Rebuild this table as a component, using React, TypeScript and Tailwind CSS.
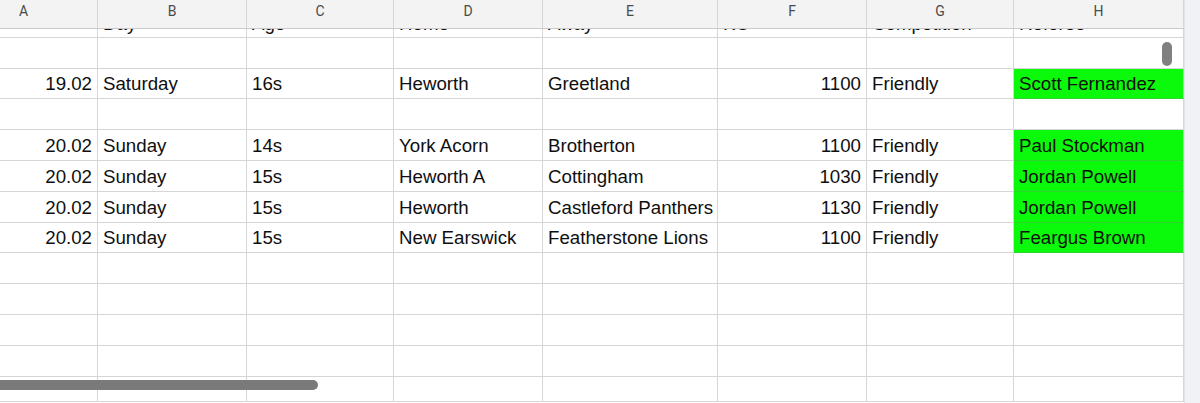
import React from "react";

const widths = [
  "w-[148px]",
  "w-[149px]",
  "w-[147px]",
  "w-[149px]",
  "w-[175px]",
  "w-[149px]",
  "w-[147px]",
  "w-[170px]",
];
const letters = ["A", "B", "C", "D", "E", "F", "G", "H"];
const rightAligned = [true, false, false, false, false, true, false, false];

type Row = { h: string; cells: string[]; green?: boolean; head?: boolean };

const empty = ["", "", "", "", "", "", "", ""];

const rows: Row[] = [
  { h: "h-[31px] mt-[-22px]", cells: ["", "Day", "Age", "Home", "Away", "KO", "Competition", "Referee"], head: true },
  { h: "h-[31px]", cells: empty },
  { h: "h-[30px]", cells: ["19.02", "Saturday", "16s", "Heworth", "Greetland", "1100", "Friendly", "Scott Fernandez"], green: true },
  { h: "h-[31px]", cells: empty },
  { h: "h-[31px]", cells: ["20.02", "Sunday", "14s", "York Acorn", "Brotherton", "1100", "Friendly", "Paul Stockman"], green: true },
  { h: "h-[31px]", cells: ["20.02", "Sunday", "15s", "Heworth A", "Cottingham", "1030", "Friendly", "Jordan Powell"], green: true },
  { h: "h-[31px]", cells: ["20.02", "Sunday", "15s", "Heworth", "Castleford Panthers", "1130", "Friendly", "Jordan Powell"], green: true },
  { h: "h-[30px]", cells: ["20.02", "Sunday", "15s", "New Earswick", "Featherstone Lions", "1100", "Friendly", "Feargus Brown"], green: true },
  { h: "h-[31px]", cells: empty },
  { h: "h-[31px]", cells: empty },
  { h: "h-[31px]", cells: empty },
  { h: "h-[31px]", cells: empty },
  { h: "h-[31px]", cells: empty },
];

export default function App() {
  return (
    <div
      className="relative w-[1200px] h-[403px] overflow-hidden bg-white flex"
      style={{ fontFamily: '"Liberation Sans", Arial, sans-serif' }}
    >
      <div className="flex flex-col ml-[-50px] h-[403px]">
        {/* column header */}
        <div className="flex h-[29px] bg-[#f3f3f3] border-b border-[#c9c9c9] shrink-0">
          {letters.map((l, i) => (
            <div
              key={l}
              className={`${widths[i]} h-full border-r border-[#d6d6d6] flex justify-center pt-[4px] text-[14px] leading-[14px] text-[#4a4a4a]`}
              style={{ fontFamily: 'Roboto, "Liberation Sans", sans-serif' }}
            >
              {l}
            </div>
          ))}
        </div>
        {/* body */}
        <div className="h-[373px] overflow-hidden border-b border-[#d6d6d6] shrink-0">
          {rows.map((r, ri) => (
            <div key={ri} className={`flex ${r.h}`}>
              {r.cells.map((c, ci) => {
                const green = r.green && ci === 7;
                return (
                  <div
                    key={ci}
                    className={`${widths[ci]} h-full shrink-0 border-r border-b ${
                      green ? "bg-[#0bfa0b] border-b-[#2fd52f] border-r-[#c9c9c9]" : "border-[#d6d6d6]"
                    } flex items-end ${r.head ? "pb-[2px]" : "pb-[3px]"} ${
                      rightAligned[ci] && !r.head ? "justify-end pr-[5px]" : "justify-start pl-[5px]"
                    } text-[18.7px] leading-[22px] text-[#0f0f0f] whitespace-nowrap overflow-hidden`}
                  >
                    {c}
                  </div>
                );
              })}
            </div>
          ))}
        </div>
      </div>
      {/* right strip */}
      <div className="w-[16px] h-[403px] bg-[#f1f2f5] border-l border-[#e3e4e8] shrink-0" />

      {/* vertical scroll thumb */}
      <div className="absolute left-[1162px] top-[42px] w-[10px] h-[24px] rounded-full bg-[#808080]" />
      {/* horizontal scroll thumb */}
      <div className="absolute left-0 top-[380px] w-[318px] h-[10px] rounded-r-full bg-[#7a7a7a]" />
    </div>
  );
}
